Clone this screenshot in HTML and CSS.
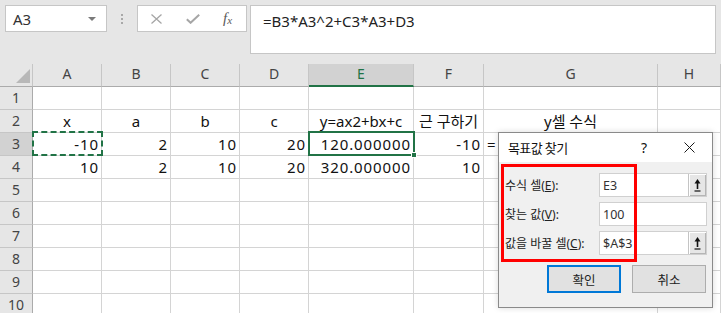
FILE: index.html
```html
<!DOCTYPE html>
<html lang="ko">
<head>
  <meta charset="UTF-8">
  <title>목표값 찾기</title>
  <link rel="stylesheet" href="styles.css">
</head>
<body>
<div class="app">

  <div class="toolbar">
    <div class="name-box">
      <span>A3</span>
      <svg width="8" height="4" viewBox="0 0 8 4"><path d="M0 0h8L4 4z" fill="#7a7a7a"/></svg>
    </div>
    <div class="grip"><i></i><i></i><i></i></div>
    <div class="fx-box">
      <svg class="ico-x" width="11" height="10" viewBox="0 0 11 10"><path d="M0.5 0.5l10 9M10.5 0.5l-10 9" stroke="#a6a6a6" stroke-width="1.3" fill="none"/></svg>
      <svg class="ico-ok" width="14" height="10" viewBox="0 0 14 10"><path d="M0.8 5.2l3.8 3.6L13.2 0.8" stroke="#a6a6a6" stroke-width="2" fill="none"/></svg>
      <span class="fx">f<sub>x</sub></span>
    </div>
    <div class="formula">=B3*A3^2+C3*A3+D3</div>
  </div>

  <div class="sheet">
    <div class="corner"><svg width="14" height="14" viewBox="0 0 14 14"><path d="M14 0V14H0z" fill="#b8b8b8"/></svg></div>
    <div class="ch">A</div><div class="ch">B</div><div class="ch">C</div><div class="ch">D</div>
    <div class="ch on">E</div><div class="ch">F</div><div class="ch">G</div><div class="ch">H</div>

    <div class="rh">1</div>
    <div class="c"></div><div class="c"></div><div class="c"></div><div class="c"></div>
    <div class="c"></div><div class="c"></div><div class="c"></div><div class="c"></div>

    <div class="rh">2</div>
    <div class="c m">x</div><div class="c m">a</div><div class="c m">b</div><div class="c m">c</div>
    <div class="c m">y=ax2+bx+c</div><div class="c m">근 구하기</div><div class="c m">y셀 수식</div><div class="c"></div>

    <div class="rh on">3</div>
    <div class="c r">-10</div><div class="c r">2</div><div class="c r">10</div><div class="c r">20</div>
    <div class="c r">120.000000</div><div class="c r">-10</div><div class="c">=</div><div class="c"></div>

    <div class="rh">4</div>
    <div class="c r">10</div><div class="c r">2</div><div class="c r">10</div><div class="c r">20</div>
    <div class="c r">320.000000</div><div class="c r">10</div><div class="c"></div><div class="c"></div>

    <div class="rh">5</div>
    <div class="c"></div><div class="c"></div><div class="c"></div><div class="c"></div>
    <div class="c"></div><div class="c"></div><div class="c"></div><div class="c"></div>
    <div class="rh">6</div>
    <div class="c"></div><div class="c"></div><div class="c"></div><div class="c"></div>
    <div class="c"></div><div class="c"></div><div class="c"></div><div class="c"></div>
    <div class="rh">7</div>
    <div class="c"></div><div class="c"></div><div class="c"></div><div class="c"></div>
    <div class="c"></div><div class="c"></div><div class="c"></div><div class="c"></div>
    <div class="rh">8</div>
    <div class="c"></div><div class="c"></div><div class="c"></div><div class="c"></div>
    <div class="c"></div><div class="c"></div><div class="c"></div><div class="c"></div>
    <div class="rh">9</div>
    <div class="c"></div><div class="c"></div><div class="c"></div><div class="c"></div>
    <div class="c"></div><div class="c"></div><div class="c"></div><div class="c"></div>
    <div class="rh">10</div>
    <div class="c"></div><div class="c"></div><div class="c"></div><div class="c"></div>
    <div class="c"></div><div class="c"></div><div class="c"></div><div class="c"></div>

    <div class="ants"></div>
    <div class="sel"><span class="handle"></span></div>
  </div>

  <div class="dialog">
    <div class="dlg-title">
      <span class="dlg-name">목표값 찾기</span>
      <span class="dlg-help">?</span>
      <span class="dlg-close">
        <svg width="11" height="11" viewBox="0 0 11 11"><path d="M0.5 0.5l10 10M10.5 0.5l-10 10" stroke="#1a1a1a" stroke-width="1" fill="none"/></svg>
      </span>
    </div>
    <div class="dlg-body">
      <div class="field">
        <label>수식 셀(<u>E</u>):</label>
        <div class="input">E3<span class="ref-btn"><svg width="7" height="14" viewBox="0 0 7 14"><path d="M3.5 1L6.5 5.5H0.5z" fill="#111"/><path d="M3.5 4v7" stroke="#111" stroke-width="1.6"/><path d="M0.5 13h6" stroke="#111" stroke-width="1.2"/></svg></span></div>
      </div>
      <div class="field">
        <label>찾는 값(<u>V</u>):</label>
        <div class="input">100</div>
      </div>
      <div class="field">
        <label>값을 바꿀 셀(<u>C</u>):</label>
        <div class="input">$A$3<span class="ref-btn"><svg width="7" height="14" viewBox="0 0 7 14"><path d="M3.5 1L6.5 5.5H0.5z" fill="#111"/><path d="M3.5 4v7" stroke="#111" stroke-width="1.6"/><path d="M0.5 13h6" stroke="#111" stroke-width="1.2"/></svg></span></div>
      </div>
      <div class="buttons">
        <button class="btn default">확인</button>
        <button class="btn">취소</button>
      </div>
    </div>
    <div class="highlight"></div>
  </div>

</div>
</body>
</html>
```

FILE: styles.css
```css
* {
  box-sizing: border-box;
}

body {
  margin: 0;
  font-family: "Noto Sans", "Noto Sans CJK KR", sans-serif;
  background-color: #e6e6e6;
  color: #111;
}

.app {
  position: relative;
  width: 721px;
  height: 313px;
  overflow: hidden;
}

/* formula bar */
.toolbar {
  height: 64px;
  display: flex;
  align-items: flex-start;
  padding: 5px 5px 0 5px;
}

.name-box {
  width: 102px;
  height: 27px;
  background-color: #fff;
  border: 1px solid #c6c6c6;
  display: flex;
  align-items: center;
  justify-content: space-between;
  padding: 0 10px 0 7px;
  font-size: 15px;
  color: #333;
}

.grip {
  width: 30px;
  display: flex;
  flex-direction: column;
  align-items: center;
  gap: 2px;
  padding-top: 9px;
}

.grip i {
  width: 2px;
  height: 2px;
  background-color: #a8a8a8;
}

.fx-box {
  width: 110px;
  height: 27px;
  background-color: #fff;
  border: 1px solid #c6c6c6;
  display: flex;
  align-items: center;
  padding-left: 13px;
}

.ico-ok {
  margin-left: 24px;
}

.fx {
  margin-left: 23px;
  font-family: "Liberation Serif", serif;
  font-style: italic;
  font-size: 15px;
  color: #5a5a5a;
}

.fx sub {
  font-size: 11px;
  vertical-align: -1px;
}

.formula {
  margin-left: 3px;
  width: 466px;
  height: 49px;
  background-color: #fff;
  border: 1px solid #c6c6c6;
  padding: 5px 0 0 12px;
  font-size: 15px;
  line-height: 20px;
  color: #222;
}

/* sheet */
.sheet {
  position: relative;
  display: grid;
  grid-template-columns: 33px 69px 69px 69px 69px 105px 70px 174px 63px;
  grid-auto-rows: 23px;
  background-color: #fff;
}

.corner {
  background-color: #e6e6e6;
  border-right: 1px solid #c6c6c6;
  border-bottom: 1px solid #ababab;
  display: flex;
  align-items: flex-end;
  justify-content: flex-end;
  padding: 0 2px 3px 0;
}

.ch {
  background-color: #e6e6e6;
  border-right: 1px solid #c6c6c6;
  border-bottom: 1px solid #ababab;
  text-align: center;
  font-size: 14px;
  line-height: 20px;
  color: #444;
}

.ch.on {
  background-color: #d2d2d2;
  color: #217346;
  border-bottom: 2px solid #217346;
}

.rh {
  background-color: #e6e6e6;
  border-right: 1px solid #ababab;
  border-bottom: 1px solid #c6c6c6;
  text-align: center;
  font-size: 14px;
  line-height: 22px;
  color: #444;
}

.rh.on {
  background-color: #d2d2d2;
}

.c {
  border-right: 1px solid #d4d4d4;
  border-bottom: 1px solid #d4d4d4;
  font-size: 15px;
  line-height: 23px;
  padding: 0 3px;
  white-space: nowrap;
}

.c.r {
  text-align: right;
  letter-spacing: 0.9px;
  padding-right: 2px;
}

.c.m {
  text-align: center;
}

.ants {
  position: absolute;
  left: 32px;
  top: 67px;
  width: 71px;
  height: 25px;
  border: 2px dashed #217346;
}

.sel {
  position: absolute;
  left: 308px;
  top: 67px;
  width: 107px;
  height: 25px;
  border: 2px solid #217346;
}

.handle {
  position: absolute;
  right: -4px;
  bottom: -4px;
  width: 6px;
  height: 6px;
  background-color: #217346;
  border: 1px solid #fff;
}

/* goal seek dialog */
.dialog {
  position: absolute;
  left: 498px;
  top: 132px;
  width: 215px;
  height: 176px;
  background-color: #f0f0f0;
  border: 1px solid #8a8a8a;
  box-shadow: 0 0 6px rgba(0, 0, 0, 0.15);
  font-size: 12px;
  color: #222;
}

.dlg-title {
  height: 29px;
  background-color: #fff;
  display: flex;
  align-items: center;
  padding-left: 9px;
  font-size: 13px;
  color: #111;
}

.dlg-name {
  flex: 1;
  letter-spacing: -0.6px;
}

.dlg-help {
  width: 20px;
  margin-right: 12px;
  text-align: center;
  font-size: 14px;
}

.dlg-close {
  width: 46px;
  display: flex;
  justify-content: center;
}

.dlg-body {
  padding: 11px 5px 0 6px;
}

.field {
  display: flex;
  align-items: center;
  height: 24px;
  margin-bottom: 5px;
}

.field label {
  width: 94px;
  white-space: nowrap;
}

.input {
  width: 108px;
  height: 24px;
  background-color: #fff;
  border: 1px solid #d0d0d0;
  display: flex;
  align-items: center;
  padding-left: 3px;
  font-size: 12.5px;
  color: #333;
}

.ref-btn {
  margin-left: auto;
  width: 18px;
  height: 22px;
  background-color: #e6e6e6;
  border-left: 1px solid #c4c4c4;
  box-shadow: inset 1px 1px 0 #fff, inset -1px -1px 0 #b5b5b5;
  display: flex;
  align-items: center;
  justify-content: center;
}

.buttons {
  display: flex;
  justify-content: flex-end;
  gap: 11px;
  margin: 10px 1px 0 0;
}

.btn {
  width: 74px;
  height: 28px;
  background-color: #e1e1e1;
  border: 1px solid #adadad;
  font-family: inherit;
  font-size: 12.5px;
  color: #222;
  padding: 0;
}

.btn.default {
  border-color: #0078d7;
  box-shadow: inset 0 0 0 1px #0078d7;
}

.highlight {
  position: absolute;
  left: 2px;
  top: 31px;
  width: 136px;
  height: 98px;
  border: 3px solid #f00;
}
```
